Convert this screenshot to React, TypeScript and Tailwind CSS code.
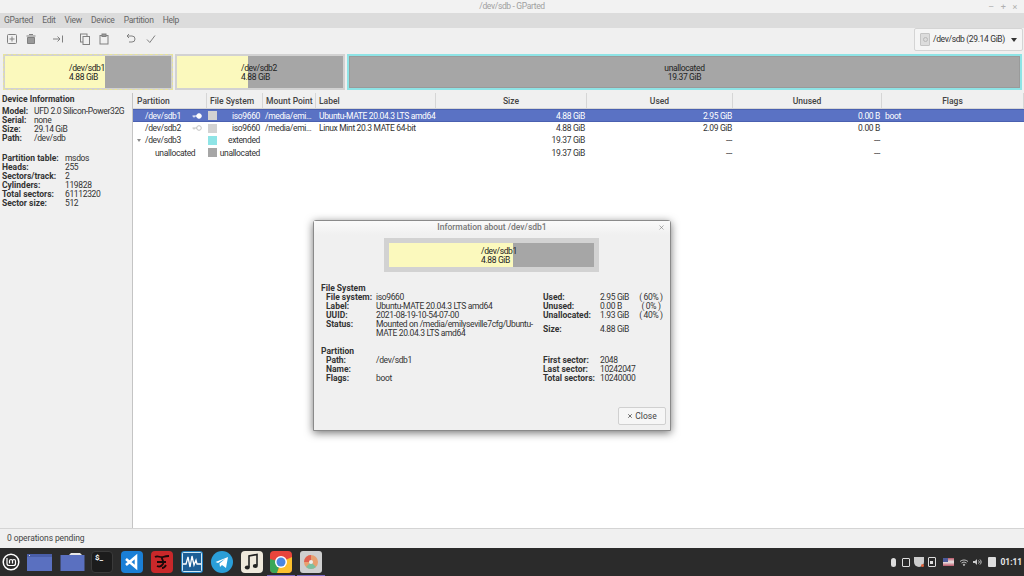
import { X } from 'lucide-react';

const font = { fontFamily: 'Roboto, "Noto Sans", sans-serif' };

const columns = [
  { name: 'Partition', w: 'w-[74px]', align: 'text-left pl-[4px]' },
  { name: 'File System', w: 'w-[56px]', align: 'text-left pl-[3px]' },
  { name: 'Mount Point', w: 'w-[53px]', align: 'text-left pl-[3px]' },
  { name: 'Label', w: 'w-[120px]', align: 'text-left pl-[3px]' },
  { name: 'Size', w: 'w-[151px]', align: 'text-center' },
  { name: 'Used', w: 'w-[146px]', align: 'text-center' },
  { name: 'Unused', w: 'w-[149px]', align: 'text-center' },
  { name: 'Flags', w: 'flex-1', align: 'text-center' },
];

const rows = [
  { part: '/dev/sdb1', indent: 'pl-[12px]', key: 'on', swatch: 'bg-[#d2d2d2]', fs: 'iso9660', mount: '/media/emi…', label: 'Ubuntu-MATE 20.04.3 LTS amd64', size: '4.88 GiB', used: '2.95 GiB', unused: '0.00 B', flags: 'boot', selected: true },
  { part: '/dev/sdb2', indent: 'pl-[12px]', key: 'off', swatch: 'bg-[#d2d2d2]', fs: 'iso9660', mount: '/media/emi…', label: 'Linux Mint 20.3 MATE 64-bit', size: '4.88 GiB', used: '2.09 GiB', unused: '0.00 B', flags: '', selected: false },
  { part: '/dev/sdb3', indent: 'pl-[12px]', key: '', swatch: 'bg-[#8ee4e6]', fs: 'extended', mount: '', label: '', size: '19.37 GiB', used: '---', unused: '---', flags: '', selected: false, arrow: true },
  { part: 'unallocated', indent: 'pl-[22px]', key: '', swatch: 'bg-[#a6a6a6]', fs: 'unallocated', mount: '', label: '', size: '19.37 GiB', used: '---', unused: '---', flags: '', selected: false },
];

function ToolIcon({ children }: { children: React.ReactNode }) {
  return (
    <svg width="12" height="12" viewBox="0 0 12 12" fill="none" stroke="#808080" strokeWidth="1">
      {children}
    </svg>
  );
}

function Toolbar() {
  return (
    <div className="h-[24px] bg-[#f0f0f0] flex items-center relative pb-[2px]">
      <div className="flex items-center pl-[6px]">
        <ToolIcon><rect x="1.500" y="1.500" width="9" height="9" rx="1" /><path d="M6 3.500v5M3.500 6h5" /></ToolIcon>
        <div className="ml-[7px]"><ToolIcon><path d="M1.500 3h9M4 1.500h4M2.500 4.500h7v6h-7z" fill="#999" /></ToolIcon></div>
        <div className="ml-[15px]"><ToolIcon><path d="M1 6h7M5.500 3.500 8 6l-2.500 2.500M10.500 2.500v7" /></ToolIcon></div>
        <div className="ml-[15px]"><ToolIcon><rect x="1.500" y="1" width="6.500" height="8" /><rect x="4" y="3.500" width="6.500" height="8" fill="#f0f0f0" /></ToolIcon></div>
        <div className="ml-[7px]"><ToolIcon><rect x="2" y="2.500" width="8" height="8.500" /><rect x="4" y="1" width="4" height="2.500" fill="#999" /></ToolIcon></div>
        <div className="ml-[15px]"><ToolIcon><path d="M2 3h5a2.800 2.800 0 0 1 0 6H4M4 1 2 3l2 2" /></ToolIcon></div>
        <div className="ml-[8px]"><ToolIcon><path d="M2 6.500 4.800 9.500 10 2.500" /></ToolIcon></div>
      </div>
      <div className="absolute right-[1px] top-0 w-[109px] h-[23px] border border-[#d4d4d4] rounded-[2px] bg-[#f5f5f5] flex items-center pl-[5px] text-[#333]">
        <div className="w-[10px] h-[13px] bg-[#dcdcdc] border border-[#c4c4c4] rounded-[1px] flex items-center justify-center">
          <div className="w-[5px] h-[5px] rounded-full border border-[#b8b8b8]" />
        </div>
        <span className="ml-[3px] whitespace-nowrap">/dev/sdb (29.14 GiB)</span>
        <div className="ml-auto mr-[5px] w-0 h-0 border-l-[3px] border-r-[3px] border-t-[4px] border-l-transparent border-r-transparent border-t-[#333]" />
      </div>
    </div>
  );
}

function PartitionMap() {
  return (
    <div className="h-[41px] bg-[#f0f0f0] flex pl-[3px] pt-[2px] gap-[2px] text-[#222] leading-[9px]">
      <div className="w-[170px] h-[36px] border border-dashed border-[#e8e49a] bg-[#d2d2d2] p-[1px]">
        <div className="h-full flex relative">
          <div className="w-[100px] bg-[#fbf9bd]" />
          <div className="flex-1 bg-[#a6a6a6]" />
          <div className="absolute left-[64px] top-[8px]">/dev/sdb1<br />4.88 GiB</div>
        </div>
      </div>
      <div className="w-[170px] h-[36px] border-2 border-[#d2d2d2]">
        <div className="h-full flex relative">
          <div className="w-[71px] bg-[#fbf9bd]" />
          <div className="flex-1 bg-[#a6a6a6]" />
          <div className="absolute left-[64px] top-[8px]">/dev/sdb2<br />4.88 GiB</div>
        </div>
      </div>
      <div className="w-[675px] h-[36px] border-2 border-[#8ee4e6]">
        <div className="h-full bg-[#a6a6a6] border border-[#9a9a9a] flex flex-col items-center pt-[7px]">
          <span>unallocated</span>
          <span>19.37 GiB</span>
        </div>
      </div>
    </div>
  );
}

function Sidebar() {
  const top = [['Model:', 'UFD 2.0 Silicon-Power32G'], ['Serial:', 'none'], ['Size:', '29.14 GiB'], ['Path:', '/dev/sdb']];
  const bottom = [['Partition table:', 'msdos'], ['Heads:', '255'], ['Sectors/track:', '2'], ['Cylinders:', '119828'], ['Total sectors:', '61112320'], ['Sector size:', '512']];
  return (
    <div className="w-[133px] bg-[#f0f0f0] pl-[2px] leading-[9px] text-[#333] border-r border-[#c4c4c4]">
      <div className="font-bold tracking-normal h-[12px] leading-[12px]">Device Information</div>
      <div className="mt-[2px]">
        {top.map(([k, v]) => (
          <div key={k} className="flex">
            <span className="w-[32px] font-bold tracking-normal">{k}</span>
            <span className="whitespace-nowrap">{v}</span>
          </div>
        ))}
      </div>
      <div className="mt-[11px]">
        {bottom.map(([k, v]) => (
          <div key={k} className="flex">
            <span className="w-[63px] font-bold tracking-normal whitespace-nowrap">{k}</span>
            <span>{v}</span>
          </div>
        ))}
      </div>
    </div>
  );
}

function KeyIcon({ on }: { on: boolean }) {
  const c = on ? '#ffffff' : '#c0c0c0';
  return (
    <svg width="10" height="6" viewBox="0 0 10 6" fill={on ? c : 'none'} stroke={c} strokeWidth="1">
      <circle cx="7" cy="3" r="2.300" />
      <path d="M5 3H0.500M2 3v1.500" />
    </svg>
  );
}

function PartitionTable() {
  return (
    <div className="flex-1 bg-white text-[#333]">
      <div className="h-[16px] flex bg-[#f0f0f0] font-medium text-[#444] tracking-normal">
        {columns.map((c) => (
          <div key={c.name} className={`${c.w} ${c.align} border-r border-b border-[#d6d6d6] leading-[16px] whitespace-nowrap`}>{c.name}</div>
        ))}
      </div>
      {rows.map((r) => (
        <div key={r.part} className={`leading-[12px] flex whitespace-nowrap ${r.selected ? 'h-[13px] bg-[#5a72c4] text-white border-y border-[#4a60b0]' : 'h-[12.300px]'}`}>
          <div className={`w-[74px] ${r.indent} flex items-center relative`}>
            {r.arrow && <div className="absolute left-[4px] top-[5px] w-0 h-0 border-l-[2.500px] border-r-[2.500px] border-t-[3px] border-l-transparent border-r-transparent border-t-[#888]" />}
            <span>{r.part}</span>
            {r.key && <div className="absolute right-[5px] top-[3px] flex"><KeyIcon on={r.key === 'on'} /></div>}
          </div>
          <div className="w-[56px] flex items-center pl-[1px] pr-[3px]">
            <div className={`w-[9px] h-[9px] shrink-0 ${r.swatch}`} />
            <span className="ml-auto">{r.fs}</span>
          </div>
          <div className="w-[53px] pl-[2px]">{r.mount}</div>
          <div className="w-[120px] pl-[3px]">{r.label}</div>
          <div className="w-[151px] text-right pr-[2px]">{r.size}</div>
          <div className="w-[146px] text-right pr-[1px]">{r.used}</div>
          <div className="w-[149px] text-right pr-[2px]">{r.unused}</div>
          <div className="flex-1 pl-[3px]">{r.flags}</div>
        </div>
      ))}
    </div>
  );
}

function InfoDialog() {
  const fsLeft = [['File system:', 'iso9660'], ['Label:', 'Ubuntu-MATE 20.04.3 LTS amd64'], ['UUID:', '2021-08-19-10-54-07-00']];
  const fsRight = [['Used:', '2.95 GiB', '( 60% )'], ['Unused:', '0.00 B', '( 0% )'], ['Unallocated:', '1.93 GiB', '( 40% )']];
  const partLeft = [['Path:', '/dev/sdb1'], ['Name:', ''], ['Flags:', 'boot']];
  const partRight = [['First sector:', '2048'], ['Last sector:', '10242047'], ['Total sectors:', '10240000']];
  return (
    <div className="absolute left-[313px] top-[220px] w-[358px] h-[211px] bg-[#f0f0f0] border border-[#8a8a8a] rounded-t-[3px] shadow-[0_2px_8px_rgba(0,0,0,0.55)] text-[#333] leading-[9px]">
      <div className="h-[14px] pb-[2px] flex items-center justify-center relative text-[#777] font-medium tracking-normal bg-gradient-to-b from-[#fafafa] to-[#f0f0f0]">
        Information about /dev/sdb1
        <X className="absolute right-[5px] top-[3px] w-[7px] h-[7px] text-[#777]" strokeWidth={2} />
      </div>
      <div className="ml-[70px] mt-[3px] w-[215px] h-[34px] border-[5px] border-[#d2d2d2] flex relative text-[#222]">
        <div className="w-[124px] bg-[#fbf9bd]" />
        <div className="flex-1 bg-[#a6a6a6]" />
        <div className="absolute left-[92px] top-[4px]">/dev/sdb1<br />4.88 GiB</div>
      </div>
      <div className="mt-[12px] pl-[7px] font-bold tracking-normal">File System</div>
      <div className="flex">
        <div className="pl-[12px] w-[229px]">
          {fsLeft.map(([k, v]) => (
            <div key={k} className="flex">
              <span className="w-[50px] font-bold tracking-normal whitespace-nowrap">{k}</span>
              <span className="whitespace-nowrap">{v}</span>
            </div>
          ))}
          <div className="flex">
            <span className="w-[50px] font-bold tracking-normal">Status:</span>
            <span className="whitespace-nowrap">Mounted on /media/emilyseville7cfg/Ubuntu-<br />MATE 20.04.3 LTS amd64</span>
          </div>
        </div>
        <div>
          {fsRight.map(([k, v, p]) => (
            <div key={k} className="flex">
              <span className="w-[57px] font-bold tracking-normal">{k}</span>
              <span className="w-[39px]">{v}</span>
              <span className="w-[24px] text-center whitespace-nowrap">{p}</span>
            </div>
          ))}
          <div className="flex mt-[5px]">
            <span className="w-[57px] font-bold tracking-normal">Size:</span>
            <span>4.88 GiB</span>
          </div>
        </div>
      </div>
      <div className="mt-[9px] pl-[7px] font-bold tracking-normal">Partition</div>
      <div className="flex">
        <div className="pl-[12px] w-[229px]">
          {partLeft.map(([k, v]) => (
            <div key={k} className="flex h-[9px]">
              <span className="w-[50px] font-bold tracking-normal">{k}</span>
              <span>{v}</span>
            </div>
          ))}
        </div>
        <div>
          {partRight.map(([k, v]) => (
            <div key={k} className="flex">
              <span className="w-[57px] font-bold tracking-normal whitespace-nowrap">{k}</span>
              <span>{v}</span>
            </div>
          ))}
        </div>
      </div>
      <div className="absolute right-[4px] bottom-[5px] w-[48px] h-[18px] bg-[#f6f6f6] border border-[#d0d0d0] rounded-[2px] flex items-center justify-center gap-[2px] text-[#444] tracking-normal">
        <X className="w-[6px] h-[6px]" strokeWidth={3} />
        <span>Close</span>
      </div>
    </div>
  );
}

function Dock() {
  return (
    <div className="h-[28px] bg-[#2b2b2b] flex items-center relative">
      {/* mint menu */}
      <svg className="ml-[2px]" width="18" height="18" viewBox="0 0 18 18" fill="none" stroke="#fff">
        <circle cx="9" cy="9" r="7.800" strokeWidth="1.500" />
        <path d="M5 5v5.500a2 2 0 0 0 2 2h4.500a2 2 0 0 0 2-2V8a1.500 1.500 0 0 0-3 0v2.500M10.500 8a1.500 1.500 0 0 0-3 0v2.500" strokeWidth="1.200" />
      </svg>
      {/* window list */}
      <div className="ml-[7px] w-[25px] h-[17px] bg-[#5a70c0] border-t-[3px] border-[#4a5ea8] relative">
        <div className="absolute left-[2px] top-[-2px] w-[1px] h-[1px] bg-[#ddd]" />
      </div>
      {/* folder */}
      <svg className="ml-[8px]" width="25" height="18" viewBox="0 0 25 18">
        <path d="M1 2h8l2-2h9l2 2z" fill="#e8e8e8" />
        <rect x="0.500" y="2" width="24" height="16" fill="#5a70c0" />
      </svg>
      {/* terminal */}
      <div className="ml-[6px] w-[22px] h-[22px] bg-[#1c1c1c] border border-[#3a3a3a] rounded-[4px] pl-[3px] text-[8px] leading-[11px] font-bold text-white tracking-normal">$_</div>
      {/* vscode */}
      <svg className="ml-[8px]" width="22" height="22" viewBox="0 0 22 22">
        <rect width="22" height="22" rx="4" fill="#1a7fd6" />
        <path d="M5 8 15 16.500V5.500L5 14" fill="none" stroke="#fff" strokeWidth="2.600" />
      </svg>
      {/* red app */}
      <svg className="ml-[8px]" width="22" height="22" viewBox="0 0 22 22">
        <rect width="22" height="22" rx="4" fill="#c9282a" />
        <path d="M4 6c3-2 5 1 8 0s5-1 6-1M11 6c-1 3 3 4 1 7s-4 3-6 2M6 11h9M15 14c-1 2-2 3-4 3" fill="none" stroke="#1a0a0a" strokeWidth="1.800" />
      </svg>
      {/* wave monitor */}
      <svg className="ml-[8px]" width="22" height="22" viewBox="0 0 22 22">
        <rect width="22" height="22" rx="3" fill="#1f7fc0" />
        <rect x="1.500" y="1.500" width="19" height="19" rx="1" fill="#1d5f96" stroke="#cfe8f6" />
        <path d="M2 13h3l2-7 2 10 2-11 2 9 2-5 1 4h4" fill="none" stroke="#fff" strokeWidth="1.300" />
      </svg>
      {/* telegram */}
      <svg className="ml-[8px]" width="22" height="22" viewBox="0 0 22 22">
        <circle cx="11" cy="11" r="11" fill="#2a9ed8" />
        <path d="M4.500 11 17 6l-2 11-4-3-2 2-.500-3.500 6-5-7.500 4.500z" fill="#fff" />
      </svg>
      {/* music */}
      <svg className="ml-[8px]" width="22" height="22" viewBox="0 0 22 22">
        <rect width="22" height="22" rx="4" fill="#efe9dc" />
        <path d="M8 16V5l8-1.500v11" fill="none" stroke="#222" strokeWidth="1.600" />
        <ellipse cx="6.300" cy="16.500" rx="2.500" ry="2" fill="#222" />
        <ellipse cx="14.300" cy="15" rx="2.500" ry="2" fill="#222" />
      </svg>
      {/* chrome */}
      <svg className="ml-[7px]" width="22" height="22" viewBox="0 0 22 22">
        <rect width="22" height="22" rx="4" fill="#e8453c" />
        <path d="M0 8 11 11 7 22H4a4 4 0 0 1-4-4z" fill="#3aa757" />
        <path d="M11 11 22 6v12a4 4 0 0 1-4 4H7z" fill="#fbc02d" />
        <circle cx="11" cy="11" r="6" fill="#fff" />
        <circle cx="11" cy="11" r="4.500" fill="#4a87e0" />
      </svg>
      {/* last launcher */}
      <svg className="ml-[8px]" width="22" height="22" viewBox="0 0 22 22">
        <rect width="22" height="22" rx="3" fill="#cfcfcf" />
        <circle cx="11" cy="11" r="7" fill="#e8a070" />
        <path d="M11 11 4 11A7 7 0 0 1 11 4z" fill="#e06050" />
        <path d="M11 11 6 16A7 7 0 0 0 16 16z" fill="#7cc0a0" />
        <circle cx="11" cy="11" r="2" fill="#eee" />
      </svg>
      {/* running markers */}
      <div className="absolute left-[267px] bottom-0 w-[28px] h-[1px] bg-[#7a68c0]" />
      <div className="absolute left-[297px] bottom-0 w-[28px] h-[1px] bg-[#7a68c0]" />
      {/* tray */}
      <div className="ml-auto flex items-center pr-[2px] font-bold text-[#e8e8e8]">
        <div className="w-[5px] h-[9px] rounded-full bg-[#ddd]" />
        <div className="ml-[6px] w-[8px] h-[9px] border border-[#ddd] rounded-[1px]" />
        <div className="ml-[4px] w-[10px] h-[10px] bg-[#ccc] rounded-b-full relative">
          <div className="absolute right-0 bottom-0 w-[3px] h-[3px] rounded-full bg-[#e0643c]" />
        </div>
        <div className="ml-[4px] w-[8px] h-[10px] border border-[#ddd] rounded-[1px] flex items-center justify-center">
          <div className="w-[3px] h-[3px] bg-[#ddd]" />
        </div>
        <div className="ml-[7px] w-[11px] h-[8px] bg-gradient-to-b from-[#b8566a] via-[#e8e8e8] to-[#b8566a] relative">
          <div className="absolute left-0 top-0 w-[5px] h-[4px] bg-[#4c5a9a]" />
        </div>
        <svg className="ml-[5px]" width="10" height="7" viewBox="0 0 10 7" fill="none" stroke="#bbb">
          <path d="M1 2.500a6 6 0 0 1 8 0M2.500 4a4 4 0 0 1 5 0" />
          <circle cx="5" cy="5.800" r="0.700" fill="#bbb" />
        </svg>
        <svg className="ml-[4px]" width="9" height="8" viewBox="0 0 9 8" fill="#ccc">
          <path d="M0 3h2l2-2v6L2 5H0z" />
          <path d="M5.500 2.500c1 1 1 2 0 3M7 1.500c1.500 1.500 1.500 3.500 0 5" fill="none" stroke="#ccc" />
        </svg>
        <div className="ml-[6px] w-[8px] h-[10px] bg-[#ddd] rounded-[1px]" />
        <span className="ml-[5px] tracking-[-0.1px]">01:11</span>
      </div>
    </div>
  );
}

export default function App() {
  return (
    <div className="w-[1024px] h-[576px] overflow-hidden relative flex flex-col bg-white text-[8.5px] tracking-[-0.35px]" style={font}>
      <div className="h-[13px] bg-[#f2f2f2] flex items-center justify-center relative text-[#a0a0a0]">
        /dev/sdb - GParted
        <div className="absolute right-[7px] top-[1px] flex gap-[7px] text-[#b0b0b0] text-[9px] leading-[12px]">
          <span>–</span><span>+</span><span>×</span>
        </div>
      </div>
      <div className="h-[15px] bg-[#dcdcdc] flex items-center gap-[9px] pl-[4px] text-[#666] tracking-[-0.25px]">
        <span>GParted</span><span>Edit</span><span>View</span><span>Device</span><span>Partition</span><span>Help</span>
      </div>
      <Toolbar />
      <PartitionMap />
      <div className="flex-1 flex min-h-0">
        <Sidebar />
        <PartitionTable />
      </div>
      <div className="h-[20px] bg-[#f0f0f0] border-t border-[#d4d4d4] flex items-center pl-[7px] text-[#444] tracking-[-0.1px]">
        0 operations pending
      </div>
      <Dock />
      <InfoDialog />
    </div>
  );
}
